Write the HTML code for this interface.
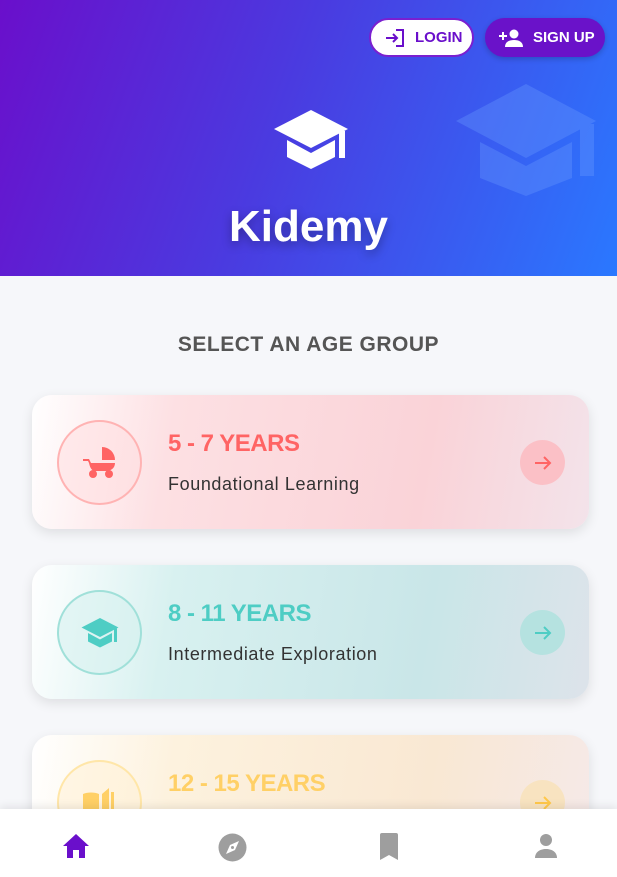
<!DOCTYPE html>
<html><head><meta charset="utf-8"><style>
*{margin:0;padding:0;box-sizing:border-box}
body{width:617px;height:877px;overflow:hidden;background:#f6f7fa;font-family:"Liberation Sans",Roboto,sans-serif;position:relative}
.hdr{position:absolute;left:0;top:0;width:617px;height:276px;background:linear-gradient(110deg,#6a0fcb 0%,#4a3be0 45%,#2a78ff 100%)}
.btn{position:absolute;top:18px;height:39px;border-radius:20px;font-weight:bold;font-size:15px;display:flex;align-items:center;gap:10px}
.login{left:369px;width:105px;background:#fff;border:2px solid #7a1fd0;color:#6a0fcb;padding-left:14px}
.signup{left:485px;width:120px;background:#6a12c9;color:#fff;padding-left:14px;box-shadow:0 2px 6px rgba(0,0,0,.2)}
.title{position:absolute;left:0;width:617px;top:202px;text-align:center;color:#fff;font-size:44px;font-weight:bold;text-shadow:0 4px 10px rgba(0,0,0,.3)}
.sel{position:absolute;top:333px;width:617px;text-align:center;font-size:21px;color:#555;font-weight:bold;letter-spacing:.5px}
.card{position:absolute;left:32px;width:557px;height:134px;border-radius:20px;box-shadow:0 4px 12px rgba(0,0,0,.1);overflow:hidden}
.circ{position:absolute;left:25px;top:25px;width:85px;height:85px;border-radius:50%;border:2px solid;display:flex;align-items:center;justify-content:center}
.ct{position:absolute;left:136px;top:35px;font-size:24px;font-weight:bold;letter-spacing:-.5px}
.cs{position:absolute;left:136px;top:79px;font-size:18px;color:#333;letter-spacing:.6px}
.arr{position:absolute;left:488px;top:45px;width:45px;height:45px;border-radius:50%;display:flex;align-items:center;justify-content:center}
.nav{position:absolute;left:0;top:809px;width:617px;height:68px;background:#fff;box-shadow:0 -3px 8px rgba(0,0,0,.08)}
.nav svg{position:absolute;top:24px}
</style></head><body>
<div class="hdr">
<svg style="position:absolute;left:456px;top:84px" width="140" height="112" viewBox="0 0 140 112"><g fill="#6a9bff" opacity=".35"><path d="M70 0L140 37 70 74 0 37z"/><path d="M24 58v36l46 18 46-18V58L70 82z"/><rect x="124" y="40" width="14" height="52"/></g></svg>
<svg style="position:absolute;left:274px;top:110px" width="74" height="60" viewBox="0 0 74 60"><g fill="#fff"><path d="M37 0L74 19 37 38 0 19z"/><path d="M13 30v17l24 12 24-12V30L37 43z"/><rect x="65" y="21" width="6" height="27"/></g></svg>
<div class="title">Kidemy</div>
</div>
<div class="btn login"><svg width="20" height="20" viewBox="0 0 20 20" fill="none" stroke="#6a0fcb" stroke-width="2"><path d="M1 10h11M8 6l4 4-4 4M11 2h7v16h-7"/></svg>LOGIN</div>
<div class="btn signup"><svg width="24" height="20" viewBox="0 0 24 20" fill="#fff"><circle cx="15" cy="6" r="4.5"/><path d="M6 19c0-5 4-7 9-7s9 2 9 7z"/><path d="M3 4h2v3h3v2H5v3H3V9H0V7h3z"/></svg>SIGN UP</div>
<div class="sel">SELECT AN AGE GROUP</div>
<div style="position:absolute;left:333px;top:402px;width:4px;height:4px;border-radius:50%;background:#e02020"></div>

<div class="card" style="top:395px;background:linear-gradient(100deg,#fff 0%,#fde0e3 25%,#fad3d8 70%,#f3e3ea 100%)">
<div class="circ" style="border-color:#ffb3b3;background:rgba(255,220,222,.5)"><svg width="34" height="34" viewBox="0 0 34 34" fill="#ff6464"><path d="M19 1a13 13 0 0 1 13 13H19z"/><path d="M0 13h6l2 4h24c0 5-4 8-9 8H12C9 25 7 22 6 17L5 15H0z"/><circle cx="10" cy="28" r="4"/><circle cx="26" cy="28" r="4"/></svg></div>
<div class="ct" style="color:#ff6464">5 - 7 YEARS</div><div class="cs">Foundational Learning</div>
<div class="arr" style="background:#fbc0c6"><svg width="20" height="20" viewBox="0 0 20 20" fill="none" stroke="#ff6464" stroke-width="2"><path d="M2 10h15M11 4l6 6-6 6"/></svg></div>
</div>

<div class="card" style="top:565px;background:linear-gradient(100deg,#fff 0%,#d8f1f0 25%,#c9e6e8 70%,#dde3ea 100%)">
<div class="circ" style="border-color:#a0e0d9;background:rgba(210,240,238,.5)"><svg width="38" height="30" viewBox="0 0 74 60" fill="#4ecdc4"><path d="M37 0L74 19 37 38 0 19z"/><path d="M13 30v17l24 12 24-12V30L37 43z"/><rect x="65" y="21" width="6" height="27"/></svg></div>
<div class="ct" style="color:#4ecdc4">8 - 11 YEARS</div><div class="cs">Intermediate Exploration</div>
<div class="arr" style="background:#b5e2e0"><svg width="20" height="20" viewBox="0 0 20 20" fill="none" stroke="#4ecdc4" stroke-width="2"><path d="M2 10h15M11 4l6 6-6 6"/></svg></div>
</div>

<div class="card" style="top:735px;background:linear-gradient(100deg,#fff 0%,#fdf2de 25%,#f9e8d3 70%,#f5e9e8 100%)">
<div class="circ" style="border-color:#ffe6a8;background:rgba(255,240,210,.5)"><svg width="38" height="38" viewBox="0 0 38 38" fill="#ffd066"><path d="M2 10c4-2 12-2 16 0v24c-4-2-12-2-16 0z"/><path d="M21 10l7-6v24l-7 6z"/><rect x="30" y="8" width="3" height="26"/></svg></div>
<div class="ct" style="color:#ffd066">12 - 15 YEARS</div>
<div class="arr" style="background:#f8e3c0"><svg width="20" height="20" viewBox="0 0 20 20" fill="none" stroke="#ffc84a" stroke-width="2"><path d="M2 10h15M11 4l6 6-6 6"/></svg></div>
</div>

<div class="nav">
<svg style="left:62px" width="28" height="26" viewBox="0 0 28 26" fill="#6a0fcb"><path d="M14 1L27 13h-4v12h-6v-8h-6v8H5V13H1z"/></svg>
<svg style="left:218px" width="29" height="29" viewBox="0 0 29 29"><circle cx="14.5" cy="14.5" r="14" fill="#9e9e9e"/><path d="M21 8l-4 9-9 4 4-9z" fill="#fff"/><circle cx="14.5" cy="14.5" r="1.5" fill="#9e9e9e"/></svg>
<svg style="left:379px" width="20" height="27" viewBox="0 0 20 27" fill="#9e9e9e"><path d="M1 2q0-2 2-2h14q2 0 2 2v25l-9-5-9 5z"/></svg>
<svg style="left:534px" width="24" height="26" viewBox="0 0 24 26" fill="#9e9e9e"><circle cx="12" cy="7" r="6"/><path d="M1 25c0-6 5-9 11-9s11 3 11 9z"/></svg>
</div>
</body></html>
